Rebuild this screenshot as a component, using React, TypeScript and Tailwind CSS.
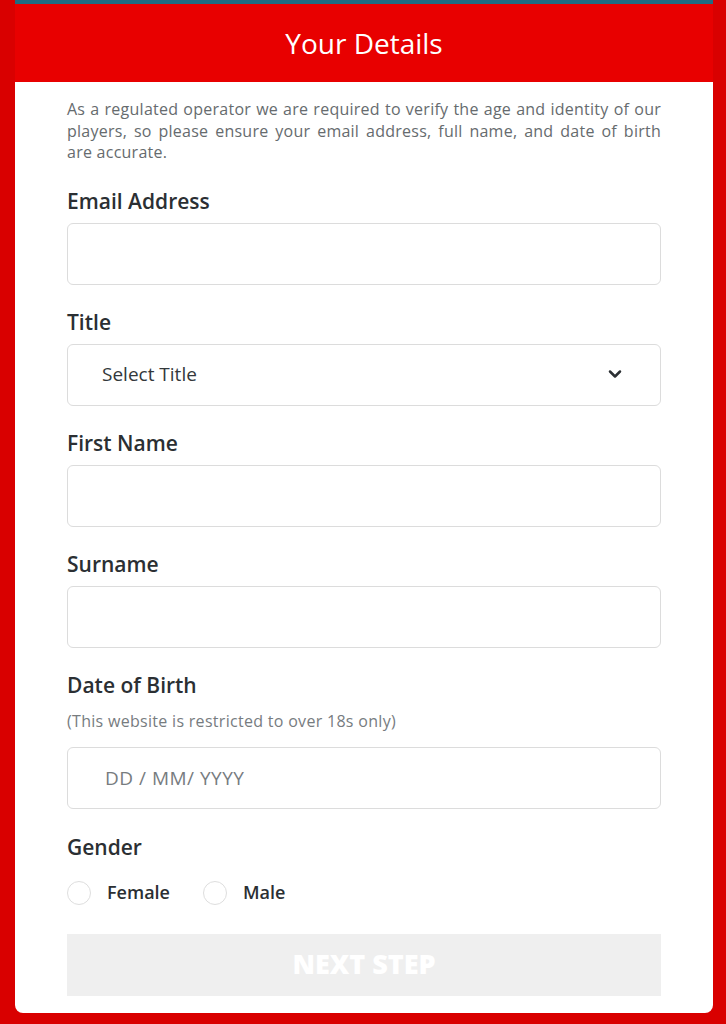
import React, { useState } from 'react';
import { ChevronDown } from 'lucide-react';

const font = { fontFamily: '"Open Sans", Lato, sans-serif' };

function Field({ label, children }: { label: string; children?: React.ReactNode }) {
  return (
    <div className="mt-[23px]">
      <label className="block text-[21px] leading-[28px] font-semibold text-[#2b2f33] mb-[8px]">{label}</label>
      {children ?? (
        <input className="block w-full h-[62px] rounded-[6px] border border-[#dcdcdc] bg-white px-[35px] outline-none" />
      )}
    </div>
  );
}

export default function App() {
  const [gender, setGender] = useState('');

  return (
    <div className="min-h-[1024px] bg-[#d90000] pl-[15px] pr-[13px] pb-[12px]" style={font}>
      <div className="h-[4px] bg-[#1f6b82]" />
      <div className="h-[78px] bg-[#e80000] flex items-center justify-center">
        <h1 className="text-white text-[28px] font-normal">Your Details</h1>
      </div>
      <div className="bg-white rounded-b-[8px] px-[52px] pt-[17px] pb-[17px]">
        <p className="text-[16px] leading-[21.5px] tracking-[0.25px] text-[#666b6e] text-justify">
          As a regulated operator we are required to verify the age and identity of our players, so please ensure your
          email address, full name, and date of birth are accurate.
        </p>

        <Field label="Email Address" />

        <Field label="Title">
          <div className="relative">
            <select className="block w-full h-[62px] appearance-none rounded-[6px] border border-[#dcdcdc] bg-white px-[34px] text-[19px] text-[#33383b] outline-none">
              <option>Select Title</option>
              <option>Mr</option>
              <option>Mrs</option>
              <option>Miss</option>
              <option>Ms</option>
            </select>
            <ChevronDown size={20} strokeWidth={3} className="absolute right-[36px] top-[20px] text-[#2b2f33] pointer-events-none" />
          </div>
        </Field>

        <Field label="First Name" />
        <Field label="Surname" />

        <div className="mt-[23px]">
          <label className="block text-[21px] leading-[28px] font-semibold text-[#2b2f33]">Date of Birth</label>
          <p className="mt-[12px] text-[16px] leading-[20px] tracking-[0.3px] text-[#777c7f]">(This website is restricted to over 18s only)</p>
          <input
            placeholder="DD / MM/ YYYY"
            className="mt-[16px] block w-full h-[62px] rounded-[6px] border border-[#dcdcdc] bg-white px-[37px] text-[19px] tracking-[0.5px] text-[#333] placeholder:text-[#777c7f] outline-none"
          />
        </div>

        <div className="mt-[24px]">
          <label className="block text-[21px] leading-[28px] font-semibold text-[#2b2f33]">Gender</label>
          <div className="mt-[20px] flex items-center h-[24px]">
            {['Female', 'Male'].map((g) => (
              <button key={g} onClick={() => setGender(g)} className="flex items-center mr-[33px]">
                <span className="w-[24px] h-[24px] rounded-full border border-[#dedede] flex items-center justify-center">
                  {gender === g && <span className="w-[12px] h-[12px] rounded-full bg-[#e80000]" />}
                </span>
                <span className="ml-[16px] text-[18px] font-semibold text-[#2b2f33]">{g}</span>
              </button>
            ))}
          </div>
        </div>

        <button
          disabled
          className="mt-[29px] block w-full h-[62px] bg-[#efefef] text-white text-[27px] font-extrabold uppercase"
        >
          Next Step
        </button>
      </div>
    </div>
  );
}
